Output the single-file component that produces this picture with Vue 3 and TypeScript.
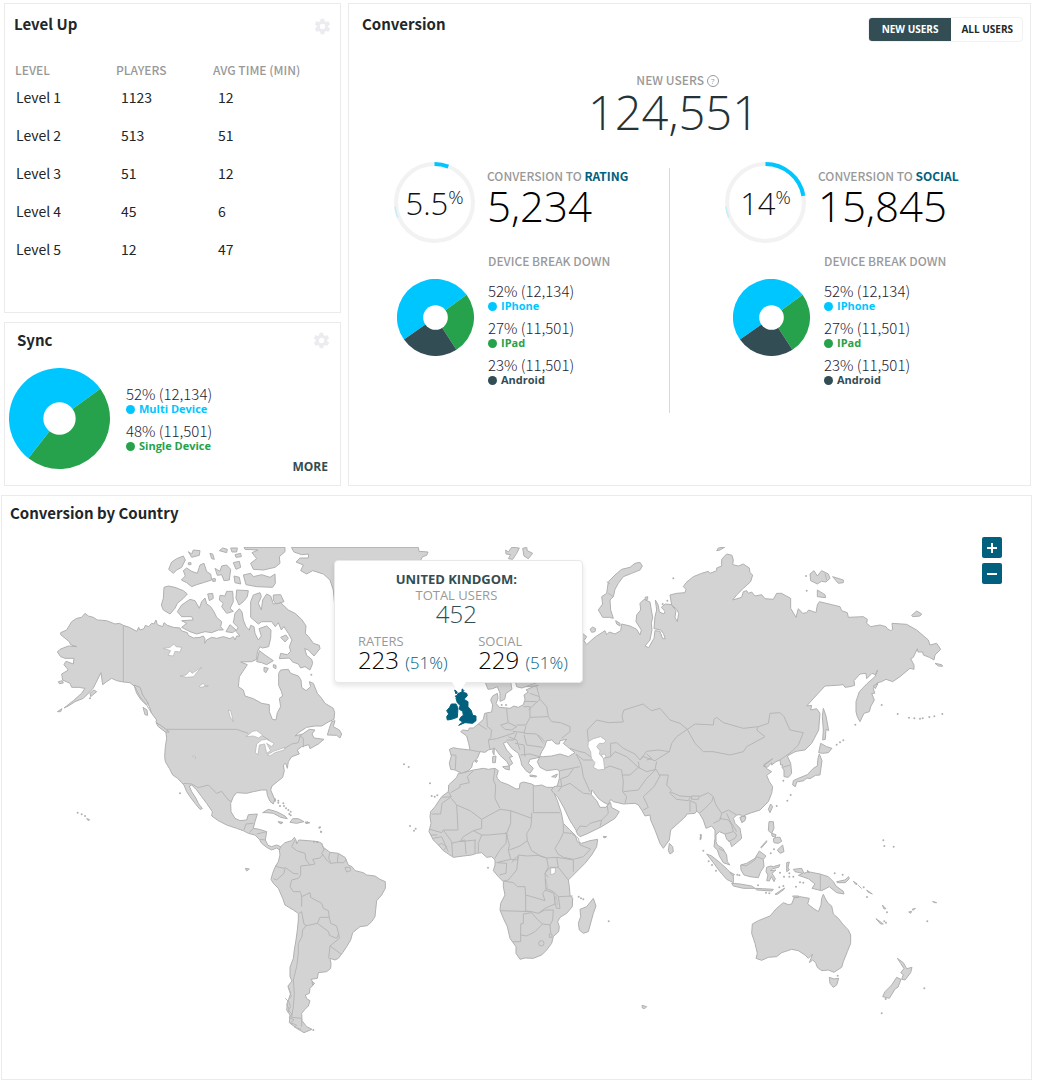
<script setup lang="ts">
import { ref } from 'vue'

interface Slice { label: string; value: string; color: string; from: number; to: number }
interface MapSheet { id: string; transform: string; land: string[]; water: string[]; borders: string[]; specks?: [number, number][] }

const blue = '#00c6ff'
const green = '#25a24b'
const slate = '#324d53'

const levels = [
  { name: 'Level 1', players: 1123, time: 12 },
  { name: 'Level 2', players: 513, time: 51 },
  { name: 'Level 3', players: 51, time: 12 },
  { name: 'Level 4', players: 45, time: 6 },
  { name: 'Level 5', players: 12, time: 47 },
]

const syncSlices: Slice[] = [
  { label: 'Multi Device', value: '52% (12,134)', color: blue, from: 218, to: 414 },
  { label: 'Single Device', value: '48% (11,501)', color: green, from: 54, to: 218 },
]

const deviceSlices: Slice[] = [
  { label: 'IPhone', value: '52% (12,134)', color: blue, from: 235, to: 414 },
  { label: 'IPad', value: '27% (11,501)', color: green, from: 54, to: 147 },
  { label: 'Android', value: '23% (11,501)', color: slate, from: 147, to: 235 },
]

const funnels = [
  { target: 'RATING', percent: '5.5', total: '5,234', sweep: 21 },
  { target: 'SOCIAL', percent: '14', total: '15,845', sweep: 80 },
]

const audiences = ['NEW USERS', 'ALL USERS']
const audience = ref(audiences[0])

function point(angle: number, radius: number): string {
  const rad = ((angle - 90) * Math.PI) / 180
  return `${(50 + radius * Math.cos(rad)).toFixed(2)} ${(50 + radius * Math.sin(rad)).toFixed(2)}`
}

function arc(from: number, to: number, radius: number): string {
  return `M${point(from, radius)}A${radius} ${radius} 0 0 1 ${point(to, radius)}`
}

function wedge(slice: Slice): string {
  const large = slice.to - slice.from > 180 ? 1 : 0
  return `M50 50L${point(slice.from, 50)}A50 50 0 ${large} 1 ${point(slice.to, 50)}Z`
}

const gear =
  'M19.4 13a7.5 7.5 0 0 0 0-2l2.1-1.6a.5.5 0 0 0 .1-.7l-2-3.4a.5.5 0 0 0-.6-.2l-2.5 1a7.7 7.7 0 0 0-1.7-1l-.4-2.6a.5.5 0 0 0-.5-.5h-4a.5.5 0 0 0-.5.5L9 5.1a7.7 7.7 0 0 0-1.7 1l-2.5-1a.5.5 0 0 0-.6.2l-2 3.4a.5.5 0 0 0 .1.7L4.500 11a7.5 7.5 0 0 0 0 2l-2.1 1.6a.5.5 0 0 0-.1.7l2 3.4c.1.2.4.3.6.2l2.5-1c.5.4 1.1.7 1.7 1l.4 2.6c0 .3.2.5.5.5h4c.3 0 .5-.2.5-.5l.4-2.6c.6-.3 1.2-.6 1.7-1l2.5 1c.2.1.5 0 .6-.2l2-3.4a.5.5 0 0 0-.1-.7zM12 15.5a3.5 3.5 0 1 1 0-7 3.5 3.5 0 0 1 0 7z'

const sheets: MapSheet[] = [
  {
    id: 'north-america',
    transform: 'translate(40 530) scale(.33333)',
    land: [
      'M135 250L145 258 160 262 172 270 200 272 225 282 238 280 250 286 268 292 290 304 296 292 300 300 312 296 316 286 326 290 335 280 342 282 348 270 352 284 368 290 372 278 382 286 400 292 420 294 424 302 442 308 445 316 460 324 480 322 490 318 495 326 494 340 500 330 515 322 530 325 550 320 570 326 580 320 585 330 590 318 600 318 588 304 594 292 580 278 585 250 598 236 606 246 610 270 618 290 628 300 632 286 642 290 645 310 655 330 664 318 657 296 680 288 693 300 692 325 686 350 668 354 660 350 652 366 650 388 635 395 602 396 622 404 608 425 598 440 595 470 610 480 615 498 640 506 665 520 688 524 688 545 697 568 708 570 712 548 722 530 718 505 728 498 724 484 716 466 716 430 722 420 745 418 752 430 775 438 783 450 785 472 798 482 812 470 808 455 820 460 832 490 845 505 855 520 880 535 884 548 882 568 865 576 845 588 825 588 800 592 780 605 765 618 788 612 808 598 825 600 816 612 822 624 852 628 835 642 810 656 806 644 785 650 772 660 778 672 755 680 745 695 742 715 737 700 730 705 733 722 728 742 712 755 696 768 692 780 704 808 700 822 690 814 682 796 680 780 665 780 640 785 620 790 590 788 580 800 572 820 573 845 585 865 600 872 620 870 625 854 652 852 645 875 640 895 658 898 680 905 676 930 684 946 695 950 710 945 722 950 722 962 710 954 695 960 680 952 665 940 658 928 645 915 625 910 612 903 590 895 560 885 535 872 515 858 517 845 500 820 485 800 470 780 455 765 448 768 455 785 468 805 475 820 487 836 480 838 465 820 450 800 440 785 432 765 425 758 413 745 398 735 388 715 376 695 374 680 376 650 380 625 378 608 362 592 348 575 350 570 335 550 328 530 320 515 305 500 300 480 285 470 270 458 250 456 230 452 215 445 200 455 188 464 183 428 172 450 160 474 150 485 130 505 105 515 85 528 72 534 100 512 125 490 135 475 115 472 95 472 90 460 68 450 65 432 85 420 72 404 78 394 100 402 102 385 75 385 62 380 52 366 60 358 85 348 110 350 92 344 88 335 62 314 62 308 80 300 95 275 110 265 125 262Z',
      'M450 208L465 212 478 235 485 215 495 204 500 222 512 230 520 242 530 262 545 275 542 290 550 300 535 300 515 308 495 305 470 312 450 305 425 292 440 280 425 272 460 270 455 260 425 260 412 245 425 225Z',
      'M372 172L385 168 405 172 430 182 442 192 430 205 412 220 405 235 390 252 370 240 364 225 370 205Z',
      'M386 118L395 96 410 86 430 78 436 90 425 112 410 120 400 130Z',
      'M430 122L440 114 455 124 472 130 480 105 492 100 500 125 512 132 515 150 490 158 470 164 455 170 440 158 424 150 436 138Z',
      'M445 65L455 72 460 60 480 62 478 76 455 82Z', 'M510 70L518 72 523 88 515 86Z',
      'M525 115L540 124 545 108 560 105 572 118 568 150 552 152 545 134 532 136Z',
      'M580 98L598 94 602 112 588 118Z', 'M582 138L598 142 602 162 585 158Z',
      'M538 62L548 54 562 58 560 68Z', 'M572 54L592 54 590 66 576 66Z', 'M585 74L602 70 604 80 588 82Z',
      'M610 135L632 130 640 140 665 134 690 142 705 132 706 160 698 172 650 170 618 164Z',
      'M612 52L735 52 735 65 718 80 720 100 705 112 670 120 640 118 632 100 650 86 636 68 654 60 615 58Z',
      'M590 180L625 182 622 200 610 215 597 225 588 205Z',
      'M540 196L555 198 560 184 578 184 580 215 570 235 580 244 560 250 545 230 550 220 538 210Z',
      'M503 192L518 190 520 205 508 212Z', 'M570 284L588 300 578 308 558 305Z', 'M445 98h8v6h-8zM518 146h8v8h-8z',
      'M632 215L640 195 660 188 664 200 655 220 664 240 668 210 680 192 692 198 700 222 722 218 745 240 765 250 785 268 798 288 796 310 806 320 820 340 838 346 840 356 822 378 805 360 794 356 800 376 815 388 818 400 810 420 795 410 782 414 775 402 758 396 748 384 718 386 722 370 742 374 752 364 748 350 756 330 745 310 732 290 724 300 715 278 706 290 695 275 665 275 655 282 632 262Z',
      'M700 195L722 194 732 215 708 222 700 210Z', 'M650 395L658 362 675 375 700 392 680 404 665 398Z',
      'M722 322L738 315 745 325 735 336Z', 'M672 412L685 415 678 428 672 424Z', 'M700 404l8 2 0 10-8-4z',
      'M868 595L875 575 885 572 880 590 898 600 905 612 900 624 890 616 862 615Z',
      'M668 848L685 838 710 845 735 858 742 866 722 862 700 850 680 848Z', 'M750 877L758 866 775 866 792 875 770 880Z',
      'M715 876L728 878 722 881Z', 'M795 876L810 878 798 881Z', 'M150 490L162 480 170 485 152 500Z',
      'M52 545L66 536 62 545Z', 'M55 455l12-3 3 7-12 2z', 'M140 866L148 868 146 873Z', 'M309 532l12 8 2 16-8-2z',
      'M282 465L300 472 308 495 325 520 318 524 302 508 290 490Z', 'M348 578L365 588 388 606 376 606 355 590Z',
      'M754 52L1135 52 1137 64 1164 66 1160 76 1148 80 1140 94 1120 180 1080 260 1010 360 968 458 940 420 900 320 884 225 880 180 870 150 850 132 818 122 800 132 782 122 790 105 768 96 780 84 805 84 806 72 785 74 762 66Z',
    ],
    water: [
      'M370 355L390 352 402 342 408 350 425 352 420 366 405 364 400 378 384 376 392 362Z',
      'M420 438L438 435 450 422 456 430 485 412 468 430 462 440 440 442Z', 'M478 468L490 460 494 467 505 468 480 472Z',
      'M565 540L572 542 580 575 570 560Z', 'M618 620L638 604 650 602 668 615 656 624 640 618Z',
      'M665 630L680 628 702 640 696 650 680 640 692 662 680 670 674 642 658 645 654 674 646 668 650 642Z',
      'M682 675L700 664 735 652 732 660 705 668 690 678Z', 'M458 678l8 1 1 6-5-2z',
    ],
    borders: [
      'M250 286V456M380 598H590L625 610M668 618L690 632M735 655L755 642 775 638 780 618 788 612',
      'M430 760L455 762 475 773 505 765 530 790 545 784 565 810 575 815M612 900L618 882 640 880M640 895L628 908M680 905L650 912M676 930L660 928M790 652V625L780 618M285 470L300 500 320 525 335 550',
    ],
    specks: [[113, 848], [125, 853], [135, 858], [420, 790], [705, 808], [715, 812], [730, 820], [745, 840], [748, 852], [840, 892], [843, 905], [720, 828], [752, 856], [814, 434], [150, 505]],
  },
  {
    id: 'south-america-africa',
    transform: 'translate(230 780) scale(.33333)',
    land: [
      'M152 200L165 188 185 182 193 172 198 180 200 192 206 180 235 182 265 185 275 190 280 202 300 217 325 220 345 232 355 255 366 260 375 272 400 278 410 285 435 288 450 298 466 305 466 325 455 345 440 362 437 390 435 410 425 425 412 437 390 440 368 458 362 480 350 500 338 518 325 535 315 540 300 535 303 550 302 565 290 575 265 578 262 595 243 598 252 612 240 625 238 640 226 645 230 656 240 662 235 678 225 688 215 700 216 722 230 740 246 748 222 758 200 745 178 728 180 705 170 690 172 670 182 640 174 618 186 603 180 590 180 562 190 535 193 510 198 480 202 450 205 420 205 400 190 390 165 375 158 355 145 325 130 310 123 298 128 280 135 262 145 245 150 225 148 210Z',
      'M685 -20L700 -22 730 -30 760 -35 775 -32 795 -35 805 -28 800 -12 802 -5 812 6 835 14 858 27 868 26 870 10 880 6 905 12 915 18 935 15 950 22 974 22 970 34 982 62 994 98 1000 130 1018 148 1036 166 1042 185 1055 190 1080 182 1103 178 1100 200 1085 225 1065 250 1045 270 1025 290 1015 300 1018 320 1020 345 1028 355 1027 380 1010 400 990 412 983 425 988 440 986 455 970 470 965 490 950 510 935 525 910 535 885 534 870 538 858 520 858 500 840 475 832 440 820 415 810 390 812 370 825 345 820 320 820 305 805 290 790 272 795 255 795 240 785 230 770 232 755 218 740 220 725 225 700 228 670 232 640 212 625 195 610 180 597 155 603 130 600 110 602 95 615 80 635 50 655 35 656 15 680 -8Z',
      'M1090 355L1098 378 1090 400 1075 455 1060 460 1048 450 1045 430 1052 410 1050 388 1070 380Z',
      'M46 265l12 2-8 6zM145 125l14 2-8 4zM246 606l8 4-6 6z',
    ],
    water: ['M962 264L977 264 975 280 962 284Z', 'M945 298l3 0 4 24-3-2z', 'M826 158l6 2 2 8-6-3z', 'M976 350l3 0 3 24-3-2z'],
    borders: [
      'M195 180L185 200 200 212 225 220 228 240 240 255 212 258 212 285 205 295 185 300 180 320 190 335 212 335M135 258L148 262 165 265 162 280 140 300 130 296M165 262L190 280 205 282M212 338L215 350 240 338 242 352 275 370 280 385 295 392 298 412 270 412 262 430 230 437 222 432 215 395 207 400M215 350L215 380M298 412L302 430 320 438 326 462 320 475 298 466 296 455 262 430M326 462L328 475 300 498 333 522M300 498L296 535M230 435L218 450 216 470 205 490 205 520 200 560 190 600 193 640 190 680 185 712 215 715M215 715V740M275 190L282 210 275 220 290 240 300 250 320 248 342 248 350 238M300 217L296 235 302 248M325 222L322 246M240 255L255 252 248 238 270 234 280 222M345 262L360 262 362 272 350 276Z',
      'M174 620l10 30-10 10 8 20-8 10 12 12-8 10 14 8-10 8 18 8-6 6 20 6M166 655l8 8-4 12 8 12-4 10',
      'M655 35L664 50 636 52M664 50L636 70 632 102 605 102M662 38L690 22 690 14 718 8 712 -10 730 -28M664 55L680 75 720 92 755 118 810 88 842 92 905 115M680 75L684 150 640 150 635 158 600 148M755 118V145L730 152 700 170 690 185M795 -35L790 0 797 15 795 55 810 85M910 15V98H990M905 98V115L902 142 890 160 892 182M842 92L842 130 830 160M755 165L775 165 830 160 828 190 808 212 795 235M730 152L755 165 745 190 745 218M830 165L838 195 835 210 842 238 800 248M838 210L870 198 892 182 905 212 928 226 890 228 865 225 862 240 842 238M865 228L860 270 835 300 820 303 850 308 862 320 885 320 887 345 905 350 945 362 938 340 948 328 945 280 955 262 950 234 928 226M887 345L887 393 905 395M812 392L905 395 925 400 945 385 975 372 972 340 945 330M905 398L880 402 880 430 872 432 872 485 848 485M872 465L890 468 915 455 938 432 960 435M905 398L922 418 938 432M925 400L945 390 970 390 968 420 960 435 962 460M945 280L960 262 985 262 1015 300M948 325L970 335 985 350 1028 348M985 262L980 232 1000 235 1030 240 1030 275M975 205L990 180 1000 158 1025 160 1045 175 1050 195 1082 207 1060 230 1030 238 1000 232 984 222ZM928 228L950 234 980 232M1000 158V130M985 350L990 385 980 385 975 370M640 150L665 185 668 230M665 190L705 180 708 222M735 180L735 220M690 185L738 180M610 175L635 170 655 215M602 165H622M625 195L635 190 650 200 640 212M800 248L830 250 828 280 808 285M845 248L860 230M945 280L955 292M958 462l8 0 0 10-8 0zM926 490a8 8 0 1 0 16 0a8 8 0 1 0-16 0',
    ],
    specks: [[135, 62], [145, 68], [162, 78], [168, 85], [182, 95], [268, 143], [273, 155], [540, 138], [552, 152], [557, 146], [600, 10], [605, 48], [614, 50], [622, 46], [1046, 350], [1053, 355], [1060, 358], [1136, 424], [774, 263], [252, 185], [262, 187], [250, 750], [232, 127], [1125, 171]],
  },
  {
    id: 'eurasia',
    transform: 'translate(580 530) scale(.33333)',
    land: [
      'M-388 718L-392 700 -386 678 -392 658 -380 653 -365 656 -330 660 -334 640 -340 618 -358 605 -352 600 -335 602 -332 594 -320 594 -305 582 -290 568 -286 550 -265 546 -262 525 -268 510 -262 498 -248 490 -246 505 -252 520 -242 532 -210 535 -198 528 -185 532 -170 524 -165 508 -168 495 -155 486 -162 480 -140 470 -125 466 -150 470 -185 470 -195 450 -190 400 -150 300 -50 300 0 310 10 312 20 320 12 332 20 344 35 330 50 318 75 302 80 314 88 306 105 312 122 302 125 282 150 288 170 298 180 315 184 300 168 275 170 255 182 240 180 220 192 208 210 216 214 240 218 262 214 280 216 300 210 330 195 348 206 353 222 325 225 302 240 304 248 326 256 326 250 310 242 300 222 296 225 260 230 240 226 210 235 226 238 246 252 252 255 244 244 232 256 222 274 224 288 242 285 262 292 275 296 250 290 238 275 225 270 195 290 190 315 188 318 178 310 170 318 158 340 140 365 130 385 124 390 130 410 122 410 114 425 108 425 88 440 72 456 76 460 90 458 104 475 108 490 102 508 114 510 128 518 135 512 155 490 175 470 195 458 210 485 202 490 185 500 182 505 190 515 186 525 198 545 194 555 206 580 208 590 190 605 190 615 196 632 205 632 235 648 262 655 236 668 250 680 248 686 240 708 248 712 225 718 215 780 230 785 242 802 248 805 262 850 260 862 268 860 280 872 290 900 285 918 290 922 296 932 302 938 298 936 280 980 283 1010 300 1045 330 1050 345 1070 340 1082 358 1065 375 1062 390 1048 382 1030 375 1028 366 1014 366 1012 356 1000 382 992 386 1002 405 1002 418 990 415 960 440 938 455 918 448 905 455 892 458 880 475 884 490 875 490 883 510 872 530 868 545 852 550 840 575 832 560 828 545 828 515 838 485 860 462 885 440 893 420 886 434 876 430 860 446 858 430 840 432 822 452 824 466 810 470 795 472 790 464 770 466 735 468 710 495 680 528 695 526 692 540 710 536 720 550 716 600 695 640 675 660 648 664 640 668 622 678 632 700 635 730 625 742 612 740 612 720 606 712 608 704 602 705 600 690 588 695 575 705 575 698 562 712 550 708 578 686 570 692 552 704 560 716 575 725 560 736 568 755 578 770 575 790 565 815 540 840 515 848 495 855 488 865 482 854 470 855 460 865 465 880 480 895 485 925 470 938 455 950 450 935 440 928 435 912 418 905 408 914 408 935 412 945 428 955 440 975 442 995 450 1005 430 998 418 978 412 960 402 950 405 925 405 900 395 888 378 895 370 870 358 850 350 843 345 850 320 852 318 858 300 875 272 900 268 930 250 955 240 940 225 900 212 870 210 855 195 858 185 840 175 825 165 820 130 822 100 815 92 808 85 824 68 815 55 805 40 785 35 780 34 794 50 812 60 832 78 832 86 820 92 818 94 832 118 845 105 865 65 890 20 912 0 920 -8 912 -12 900 -30 872 -48 834 -66 802 -80 788 -86 780 -78 770 -68 768 -62 745 -62 722 -70 718 -100 722 -120 712 -128 695 -120 680 -110 680 -85 678 -60 672 -35 680 -15 668 -32 655 -50 640 -40 628 -60 632 -62 642 -72 642 -85 630 -100 632 -106 650 -115 665 -122 682 -135 685 -150 688 -155 700 -140 715 -150 730 -162 722 -175 705 -178 690 -185 670 -205 655 -220 635 -230 640 -220 660 -202 680 -212 682 -202 700 -212 708 -220 694 -240 676 -255 655 -275 660 -285 667 -300 665 -308 685 -322 698 -325 712 -335 722 -355 730 -375 720Z',
      'M-285 455L-276 478 -262 476 -248 470 -240 490 -240 514 -226 508 -222 490 -204 478 -208 455Z',
      'M-195 450L-190 470 -175 474 -140 462 -120 455Z',
      'M180 97L187 108 180 120 155 130 130 140 115 160 105 178 100 200 90 210 92 240 100 265 88 262 68 262 55 240 68 222 65 200 80 190 85 155 105 135 125 118 150 112 165 100Z',
      'M-223 60L-215 66 -205 52 -182 54 -190 70 -202 88 -215 86 -208 74 -222 72Z', 'M-172 55L-160 52 -158 62 -142 70 -155 86 -168 78Z',
      'M30 298l8-7 9 5-2 9-10 2z', 'M410 62L415 54 435 51 420 60Z',
      'M690 132L702 122 712 138 725 122 745 132 750 145 738 156 724 154 712 162 692 152Z', 'M758 140L790 150 790 158 775 160Z',
      'M712 180L720 185 735 194 737 203 712 200Z', 'M107 272L120 280 120 288 110 282Z', 'M195 202l8-2 0 8-7 0z',
      'M995 256L1010 243 1025 252 1020 258 998 260Z', 'M1065 400L1085 404 1088 409 1075 408Z',
      'M730 535L738 558 746 602 738 598 736 628 728 630 730 600 727 560Z', 'M722 640L740 650 756 655 745 668 728 670 716 668Z',
      'M718 672L726 692 720 735 706 736 690 746 680 744 672 752 650 756 646 770 638 765 640 752 655 745 682 734 700 715 712 708 714 685Z',
      'M572 822L578 830 570 848 565 838Z', 'M480 862L495 856 495 868 486 878Z', 'M268 940L278 950 280 965 270 972 265 962Z',
      'M-257 655l-3 0-2 12 4 8zM-262 680l10-2-2 20-8 0zM-232 710L-212 708 -212 720 -226 716ZM-150 735L-130 738 -132 741 -150 739ZM-85 740L-68 732 -72 742ZM-315 692l8 0-4 6z',
      'M880 468l14-8-8 16z', 'M70 919l10 1-8 4z',
    ],
    water: ['M25 635L40 626 62 620 78 632 72 640 58 640 50 650 60 662 58 672 70 685 74 718 55 720 40 712 45 698 34 685 32 665 24 650Z', 'M64 674L74 672 78 680 70 686Z'],
    borders: [
      'M25 635L22 600 50 570 85 578 130 576 126 558 132 540 190 522 205 535 215 542 240 535 270 570 300 580 322 598 290 620 275 640 268 665 235 660 200 664 180 690 165 672 130 655 110 638 92 640 92 680M74 684L92 680 105 665 140 680 175 712M180 690L190 680 225 692 268 665M200 672L215 685 200 690M175 695L178 715M225 718L230 695M74 715L90 708 125 720 130 755 128 785 140 800 135 820M128 735L150 735 175 712 200 725 228 718 200 745 175 780 130 785M228 718L240 738 222 770 190 800 205 832 190 840M236 735L265 735 260 765 275 782M270 785L300 798 332 800 325 812 290 808 270 790ZM335 798L358 798 355 808 335 808ZM330 810L330 845M350 845L348 820 330 812M358 800L385 788 400 800 395 815 375 835 358 850M400 800L408 825 425 850 445 840 470 855M425 850L420 870 400 880M418 865L445 870 455 885 460 905 435 912M462 905L470 915 465 925 445 935M440 850L450 872 470 905M416 955L435 965M322 598L345 582 400 585 402 568 410 562 430 578 490 595 535 590 530 600 555 620 500 650 490 665 450 675 400 665 370 665 345 640ZM535 590L565 580 570 550 600 548 612 560 630 600 670 608 655 645 635 665 600 690M608 712L630 705',
      'M-30 655L0 665 15 668 34 682M-12 672L10 690 38 690M-12 672L0 695 5 710 10 740 30 785M-60 722L-20 714 0 710M-60 748L-35 738 -20 716M-70 768L-55 770 -30 760 10 790 32 792M-58 748L-55 770 -66 785M-12 905L0 888 20 890 30 880 65 870 60 890M65 870L85 850 82 828',
      'M-220 535L-218 560 -215 578M-238 585L-215 578 -190 590 -205 600 -225 598ZM-280 550L-278 590 -265 600 -268 620M-305 582L-280 598M-275 630L-250 626 -225 618 -195 608M-170 530L-150 530 -150 562 -162 585 -190 585M-155 540L-120 508 -100 530 -95 560 -150 562M-95 560L-85 575 -58 578 -30 590 -30 605 -55 625M-162 588L-168 610 -130 612 -110 640M-168 615L-160 645 -112 652M-165 514L-130 515M-150 490L-122 500M-130 470L-120 508M-215 620L-190 630 -180 660M-195 640L-168 645 -165 680M-178 675L-150 672 -122 680M-202 604L-165 608M-330 660L-300 666M-270 660L-275 630 -265 620M-388 674L-372 676 -374 718M-190 608L-198 630 -220 630M-125 615L-105 635M85 190L100 200M80 155L90 162M735 130L740 150',
    ],
    specks: [[280, 145], [678, 138], [680, 182], [953, 552], [987, 563], [1003, 565], [1020, 566], [1028, 565], [1048, 561], [1063, 559], [1087, 552], [905, 525], [262, 212], [248, 222], [590, 828], [622, 812], [632, 795], [362, 915], [362, 924], [370, 962], [-528, 703], [-514, 711], [770, 644], [780, 637], [790, 631], [610, 752], [826, 584], [-235, 525], [-222, 525]],
  },
  {
    id: 'oceania',
    transform: 'translate(640 780) scale(.33333)',
    land: [
      'M550 343L558 360 565 370 575 378 580 402 595 415 608 432 625 450 632 465 632 490 622 515 610 545 605 562 582 577 565 570 545 572 532 562 527 548 518 540 508 548 518 522 505 535 495 525 475 512 455 508 425 518 410 530 385 532 365 541 348 535 352 520 345 490 335 460 337 432 355 422 390 408 410 385 430 368 445 374 455 372 462 354 480 350 508 355 503 372 520 385 535 395 543 375 545 355Z',
      'M568 592L582 597 596 595 590 615 580 622 570 610Z',
      'M772 535L790 548 800 566 816 562 812 578 795 600 785 598 790 584 782 578 792 566 782 550Z',
      'M770 592L783 598 774 622 766 626 748 655 728 650 735 635 755 615Z',
      'M387 125L400 125 402 145 395 160 385 152Z', 'M395 160L408 164 406 172 396 168ZM400 176L410 172 420 172 425 184 415 190 402 188Z', 'M412 210L428 195 432 215 420 220Z',
      'M362 202L380 182 380 186 364 204Z', 'M302 255L320 250 345 235 358 213 378 228 370 238 372 260 362 275 355 293 330 290 312 285 303 270Z',
      'M200 222L215 228 240 248 262 268 280 288 280 308 260 298 240 275 220 248Z', 'M275 310L300 312 335 318 345 325 310 325 280 318Z',
      'M380 262L392 258 400 260 420 254 416 262 398 266 392 272 408 270 396 280 406 296 402 305 394 290 388 303 380 302 384 285 378 275Z',
      'M440 248L448 246 444 262 448 270 440 275Z', 'M460 268L485 265 492 280 504 275 540 282 565 290 580 305 588 318 610 334 612 342 590 338 568 320 545 332 516 325 525 312 505 296 475 286 488 280 465 275Z',
      'M590 305L615 300 626 290 628 296 616 308 592 308Z', 'M405 343L420 333 434 324 432 328 412 343ZM345 325L368 326 400 328 396 333 350 330ZM640 304L652 312 648 314ZM655 316L664 325ZM680 330L697 342 684 336ZM708 416L730 432 722 432ZM727 375L738 386 732 387ZM806 396L815 394 812 400ZM816 388L826 385 820 391ZM878 364L890 368 882 368ZM6 676L20 680 14 686 7 684Z',
      'M458 348l18 0 0 4-16 0z', 'M270 276l14 8-6 3z', 'M182 165l2 0-2 14-2 0z', 'M300 113l8-4 10 2-4 12-8 4z', 'M502 270l6 8-4 0z',
    ],
    water: [],
    borders: ['M541 282V332M303 255L318 258 345 240 350 230 370 238'],
    specks: [[206, 244], [216, 255], [228, 272], [292, 284], [298, 286], [420, 278], [432, 290], [448, 290], [460, 290], [468, 320], [480, 307], [490, 308], [378, 338], [388, 340], [584, 280], [608, 284], [671, 322], [681, 351], [730, 181], [733, 198], [761, 200], [741, 397], [733, 424], [738, 428], [862, 424], [853, 625], [725, 700], [737, 657], [593, 587], [392, 220], [402, 208], [354, 316], [448, 280], [418, 322], [430, 318]],
  },
]
</script>

<template>
  <main class="dashboard">
    <div class="overview">
      <div class="side">
        <section class="panel levels">
          <header class="panel-head">
            <h2>Level Up</h2>
            <button class="gear" type="button" aria-label="Level Up settings">
              <svg viewBox="1 1 22 22" aria-hidden="true"><path :d="gear" /></svg>
            </button>
          </header>
          <table>
            <thead>
              <tr><th scope="col">LEVEL</th><th scope="col">PLAYERS</th><th scope="col">AVG TIME (MIN)</th></tr>
            </thead>
            <tbody>
              <tr v-for="row in levels" :key="row.name">
                <td>{{ row.name }}</td>
                <td class="num">{{ row.players }}</td>
                <td class="num">{{ row.time }}</td>
              </tr>
            </tbody>
          </table>
        </section>

        <section class="panel sync">
          <header class="panel-head">
            <h2>Sync</h2>
            <button class="gear" type="button" aria-label="Sync settings">
              <svg viewBox="1 1 22 22" aria-hidden="true"><path :d="gear" /></svg>
            </button>
          </header>
          <div class="sync-body">
            <svg class="pie large" viewBox="0 0 100 100" aria-hidden="true">
              <path v-for="s in syncSlices" :key="s.label" :d="wedge(s)" :fill="s.color" />
              <circle cx="50" cy="50" r="16" fill="#fff" />
            </svg>
            <ul class="legend">
              <li v-for="s in syncSlices" :key="s.label">
                <span class="value">{{ s.value }}</span>
                <span class="name" :style="{ color: s.color }"><i class="dot"></i>{{ s.label }}</span>
              </li>
            </ul>
          </div>
          <a class="more" href="#sync">MORE</a>
        </section>
      </div>

      <section class="panel conversion">
        <header class="panel-head">
          <h2>Conversion</h2>
          <div class="toggle" role="group" aria-label="Audience">
            <button
              v-for="name in audiences"
              :key="name"
              type="button"
              :class="{ active: audience === name }"
              :aria-pressed="audience === name"
              @click="audience = name"
            >{{ name }}</button>
          </div>
        </header>
        <div class="conversion-body">
          <div class="total">
            <p class="caption">NEW USERS <span class="help">?</span></p>
            <p class="figure">124,551</p>
          </div>
          <div class="funnels">
            <article v-for="f in funnels" :key="f.target" class="funnel">
              <div class="rate">
                <div class="ring">
                  <svg viewBox="0 0 100 100" aria-hidden="true">
                    <circle class="track" cx="50" cy="50" r="47.5" />
                    <path class="trace" :d="arc(248, 264, 49)" />
                    <path class="progress" :d="arc(0, f.sweep, 47.5)" />
                  </svg>
                  <span class="percent">{{ f.percent }}<sup>%</sup></span>
                </div>
                <div>
                  <p class="caption">CONVERSION TO <b>{{ f.target }}</b></p>
                  <p class="amount">{{ f.total }}</p>
                </div>
              </div>
              <div class="devices">
                <svg class="pie" viewBox="0 0 100 100" aria-hidden="true">
                  <path v-for="s in deviceSlices" :key="s.label" :d="wedge(s)" :fill="s.color" />
                  <circle cx="50" cy="50" r="16" fill="#fff" />
                </svg>
                <div>
                  <p class="caption">DEVICE BREAK DOWN</p>
                  <ul class="legend">
                    <li v-for="s in deviceSlices" :key="s.label">
                      <span class="value">{{ s.value }}</span>
                      <span class="name" :style="{ color: s.color }"><i class="dot"></i>{{ s.label }}</span>
                    </li>
                  </ul>
                </div>
              </div>
            </article>
          </div>
        </div>
      </section>
    </div>

    <section class="panel country">
      <header class="panel-head">
        <h2>Conversion by Country</h2>
      </header>
      <div class="map">
        <svg class="world" viewBox="2 530 1029 549" role="img" aria-label="World map">
          <defs>
            <clipPath id="frame"><rect x="2" y="547" width="1029" height="532" /></clipPath>
          </defs>
          <g clip-path="url(#frame)">
            <g v-for="sheet in sheets" :key="sheet.id" :transform="sheet.transform">
              <path v-for="(d, i) in sheet.land" :key="'l' + i" class="land" :d="d" />
              <path v-for="(d, i) in sheet.water" :key="'w' + i" class="water" :d="d" />
              <path v-for="(d, i) in sheet.borders" :key="'b' + i" class="border" :d="d" />
              <circle v-for="(c, i) in sheet.specks" :key="'s' + i" class="speck" :cx="c[0]" :cy="c[1]" r="3" />
            </g>
            <g class="selected" transform="translate(330 530) scale(.33333)">
              <path d="M384 490L396 486 410 490 412 497 402 508 414 515 414 530 424 542 428 556 438 558 438 572 428 580 405 578 386 586 398 576 388 570 392 562 400 556 398 544 388 538 390 526 382 518 378 505Z" />
              <path d="M350 542L358 533 364 522 378 522 384 534 382 562 365 568 352 570 350 560 356 552Z" />
              <path d="M374 480l8 6-4 6zM396 476l6 6-6 6zM378 496l4 4-6 0z" />
            </g>
          </g>
        </svg>

        <aside class="tip">
          <h3>UNITED KINDGOM:</h3>
          <p class="tip-label">TOTAL USERS</p>
          <p class="tip-total">452</p>
          <dl>
            <div><dt>RATERS</dt><dd>223 <small>(51%)</small></dd></div>
            <div><dt>SOCIAL</dt><dd>229 <small>(51%)</small></dd></div>
          </dl>
        </aside>

        <div class="zoom">
          <button type="button" aria-label="Zoom in"><svg viewBox="0 0 20 20" aria-hidden="true"><path d="M10 5v10M5 10h10" /></svg></button>
          <button type="button" aria-label="Zoom out"><svg viewBox="0 0 20 20" aria-hidden="true"><path d="M5 10h10" /></svg></button>
        </div>
      </div>
    </section>
  </main>
</template>

<style>
body {
  margin: 0;
  background: #fff;
}
</style>

<style scoped>
.dashboard {
  --source: "Noto Sans CJK SC", "Noto Sans", sans-serif;
  --open: "Open Sans", "Noto Sans", sans-serif;
  display: flex;
  flex-direction: column;
  gap: 9px;
  padding: 3px 11px 5px 1px;
  font-family: var(--source);
  color: #222628;
}
h2, h3, p, ul, dl, dd { margin: 0; padding: 0; }
ul { list-style: none; }
button { border: 0; padding: 0; background: none; cursor: pointer; }
.panel {
  box-sizing: border-box;
  border: 1px solid #ebebeb;
  background: #fff;
}
.overview {
  display: grid;
  grid-template-columns: minmax(0, 337fr) minmax(0, 683fr);
  gap: 7px;
  padding: 0 1px 0 3px;
}
.side { display: flex; flex-direction: column; gap: 9px; }
.panel-head {
  display: flex;
  justify-content: space-between;
  align-items: flex-start;
}
h2 { font-size: 15px; line-height: 22px; font-weight: 700; }
.caption { font-size: 12px; line-height: 18px; font-weight: 500; color: #999; }
.caption b { font-weight: 700; color: #00607d; }

.gear { width: 17px; height: 17px; }
.gear svg { display: block; width: 17px; height: 17px; fill: #ebecef; }

.levels { min-height: 310px; padding: 9px 9px 8px; }
.levels .gear { margin-top: 5px; }
table { width: 100%; margin-top: 26px; border-collapse: collapse; table-layout: fixed; }
th {
  width: 96px;
  padding: 0 0 0 1px;
  text-align: left;
  font-size: 12px;
  line-height: 17px;
  font-weight: 500;
  color: #999;
}
th:first-child { width: 100px; }
th:last-child { width: auto; }
td { padding: 0 0 0 2px; height: 38px; font-size: 14px; line-height: 20px; }
td.num { padding-left: 6px; }

.sync { display: flex; flex-direction: column; min-height: 164px; padding: 6px 10px 8px 4px; }
.sync .panel-head { padding-left: 8px; }
.sync .gear { margin-top: 3px; }
.sync-body { display: flex; align-items: center; gap: 16px; margin-top: 17px; }
.pie { display: block; flex: none; width: 77px; height: 77px; }
.pie.large { width: 101px; height: 101px; }
.legend { display: flex; flex-direction: column; gap: 7px; }
.legend li { display: flex; flex-direction: column; }
.value { font-size: 15px; line-height: 18px; font-weight: 300; color: #1c1b33; }
.name {
  display: flex;
  align-items: center;
  gap: 4px;
  font: 700 11px/12px var(--open);
}
.dot { width: 9px; height: 9px; border-radius: 50%; background: currentColor; }
.more {
  align-self: flex-end;
  margin: -10px 2px 0 0;
  font: 700 12px/16px var(--open);
  color: #324d53;
  text-decoration: none;
}

.conversion { padding: 9px 7px 8px 13px; }
.toggle { display: flex; margin-top: 4px; border: 1px solid #f2f2f2; border-radius: 4px; overflow: hidden; }
.toggle button {
  height: 23px;
  padding: 0 9px 0 10px;
  font: 700 10px/23px var(--open);
  color: #24282a;
}
.toggle .active { padding: 0 13px; background: #324d53; color: #fff; }
.conversion-body { margin-left: -13px; padding-right: 25px; }
.total { margin-top: 29px; text-align: center; }
.total .caption { padding-left: 8px; }
.help {
  display: inline-block;
  box-sizing: border-box;
  width: 12px;
  height: 12px;
  border: 1px solid #999;
  border-radius: 50%;
  font: 400 8px/10px var(--open);
  text-align: center;
  vertical-align: 1px;
}
.figure { font: 300 47px/46px var(--open); color: #253238; }
.funnels { display: grid; grid-template-columns: 320fr 329fr; margin-top: 27px; }
.funnel { padding: 0 0 27px 45px; }
.funnel + .funnel { position: relative; padding-left: 56px; }
.funnel + .funnel::before {
  content: "";
  position: absolute;
  inset: 6px auto 0 0;
  width: 1px;
  background: #d8d8d8;
}
.rate { display: flex; gap: 12px; }
.rate .caption { margin-top: 5px; }
.ring { position: relative; flex: none; width: 81px; height: 81px; }
.ring svg { display: block; width: 100%; height: 100%; fill: none; }
.track { stroke: #f2f2f2; stroke-width: 5; }
.trace { stroke: #c4eefa; stroke-width: 2; }
.progress { stroke: #00c6ff; stroke-width: 5; }
.percent {
  position: absolute;
  inset: 0;
  text-align: center;
  font: 300 31px/82px var(--open);
  color: #101314;
}
.percent sup { font-size: 19px; line-height: 0; vertical-align: 11px; }
.amount { font: 300 42px/42px var(--open); color: #000; }
.devices { display: flex; align-items: flex-end; gap: 14px; margin-top: 9px; padding-left: 3px; }
.devices .pie { margin-bottom: 30px; }
.devices .legend { margin-top: 12px; }
.funnel + .funnel .devices { padding-left: 8px; }

.country .panel-head { height: 34px; padding: 6px 8px 0; box-sizing: border-box; }
.map { position: relative; }
.world { display: block; width: 100%; height: auto; }
.land { fill: #d3d3d3; stroke: #b0b0b0; stroke-width: 3; stroke-linejoin: round; }
.water { fill: #fff; stroke: #b0b0b0; stroke-width: 2; stroke-linejoin: round; }
.border { fill: none; stroke: #b6b6b6; stroke-width: 3; stroke-linejoin: round; }
.speck { fill: #b0b0b0; }
.selected path { fill: #00607d; stroke: #00607d; stroke-width: 3; stroke-linejoin: round; }

.tip {
  position: absolute;
  top: 5.5%;
  left: 44.4%;
  box-sizing: border-box;
  width: 249px;
  margin-left: -125px;
  padding: 10px 18px 8px 14px;
  border: 1px solid #e8e8e8;
  border-radius: 4px;
  background: #fff;
  box-shadow: 0 3px 5px rgba(0, 0, 0, 0.1);
  font-family: var(--open);
  text-align: center;
}
.tip::after {
  content: "";
  position: absolute;
  top: 100%;
  left: 50%;
  margin-left: -6px;
  border: 7px solid transparent;
  border-top: 11px solid #fff;
  border-bottom: 0;
}
.tip h3 { font-size: 13px; line-height: 16px; font-weight: 700; color: #324d53; }
.tip-label, .tip dt { font-size: 13px; line-height: 16px; color: #999; }
.tip-total { font-size: 24px; line-height: 21px; font-weight: 300; color: #324d53; }
.tip dl { display: flex; justify-content: space-between; margin: 9px -4px 0 9px; text-align: left; }
.tip dd { font-size: 24px; line-height: 22px; font-weight: 300; color: #000; white-space: nowrap; }
.tip small { font-size: 17px; color: #00607d; }

.zoom { position: absolute; top: 7px; right: 29px; display: flex; flex-direction: column; gap: 5px; }
.zoom button { width: 20px; height: 21px; border-radius: 2px; background: #00607d; }
.zoom svg { display: block; width: 20px; height: 20px; fill: none; stroke: #fff; stroke-width: 2; }
</style>
